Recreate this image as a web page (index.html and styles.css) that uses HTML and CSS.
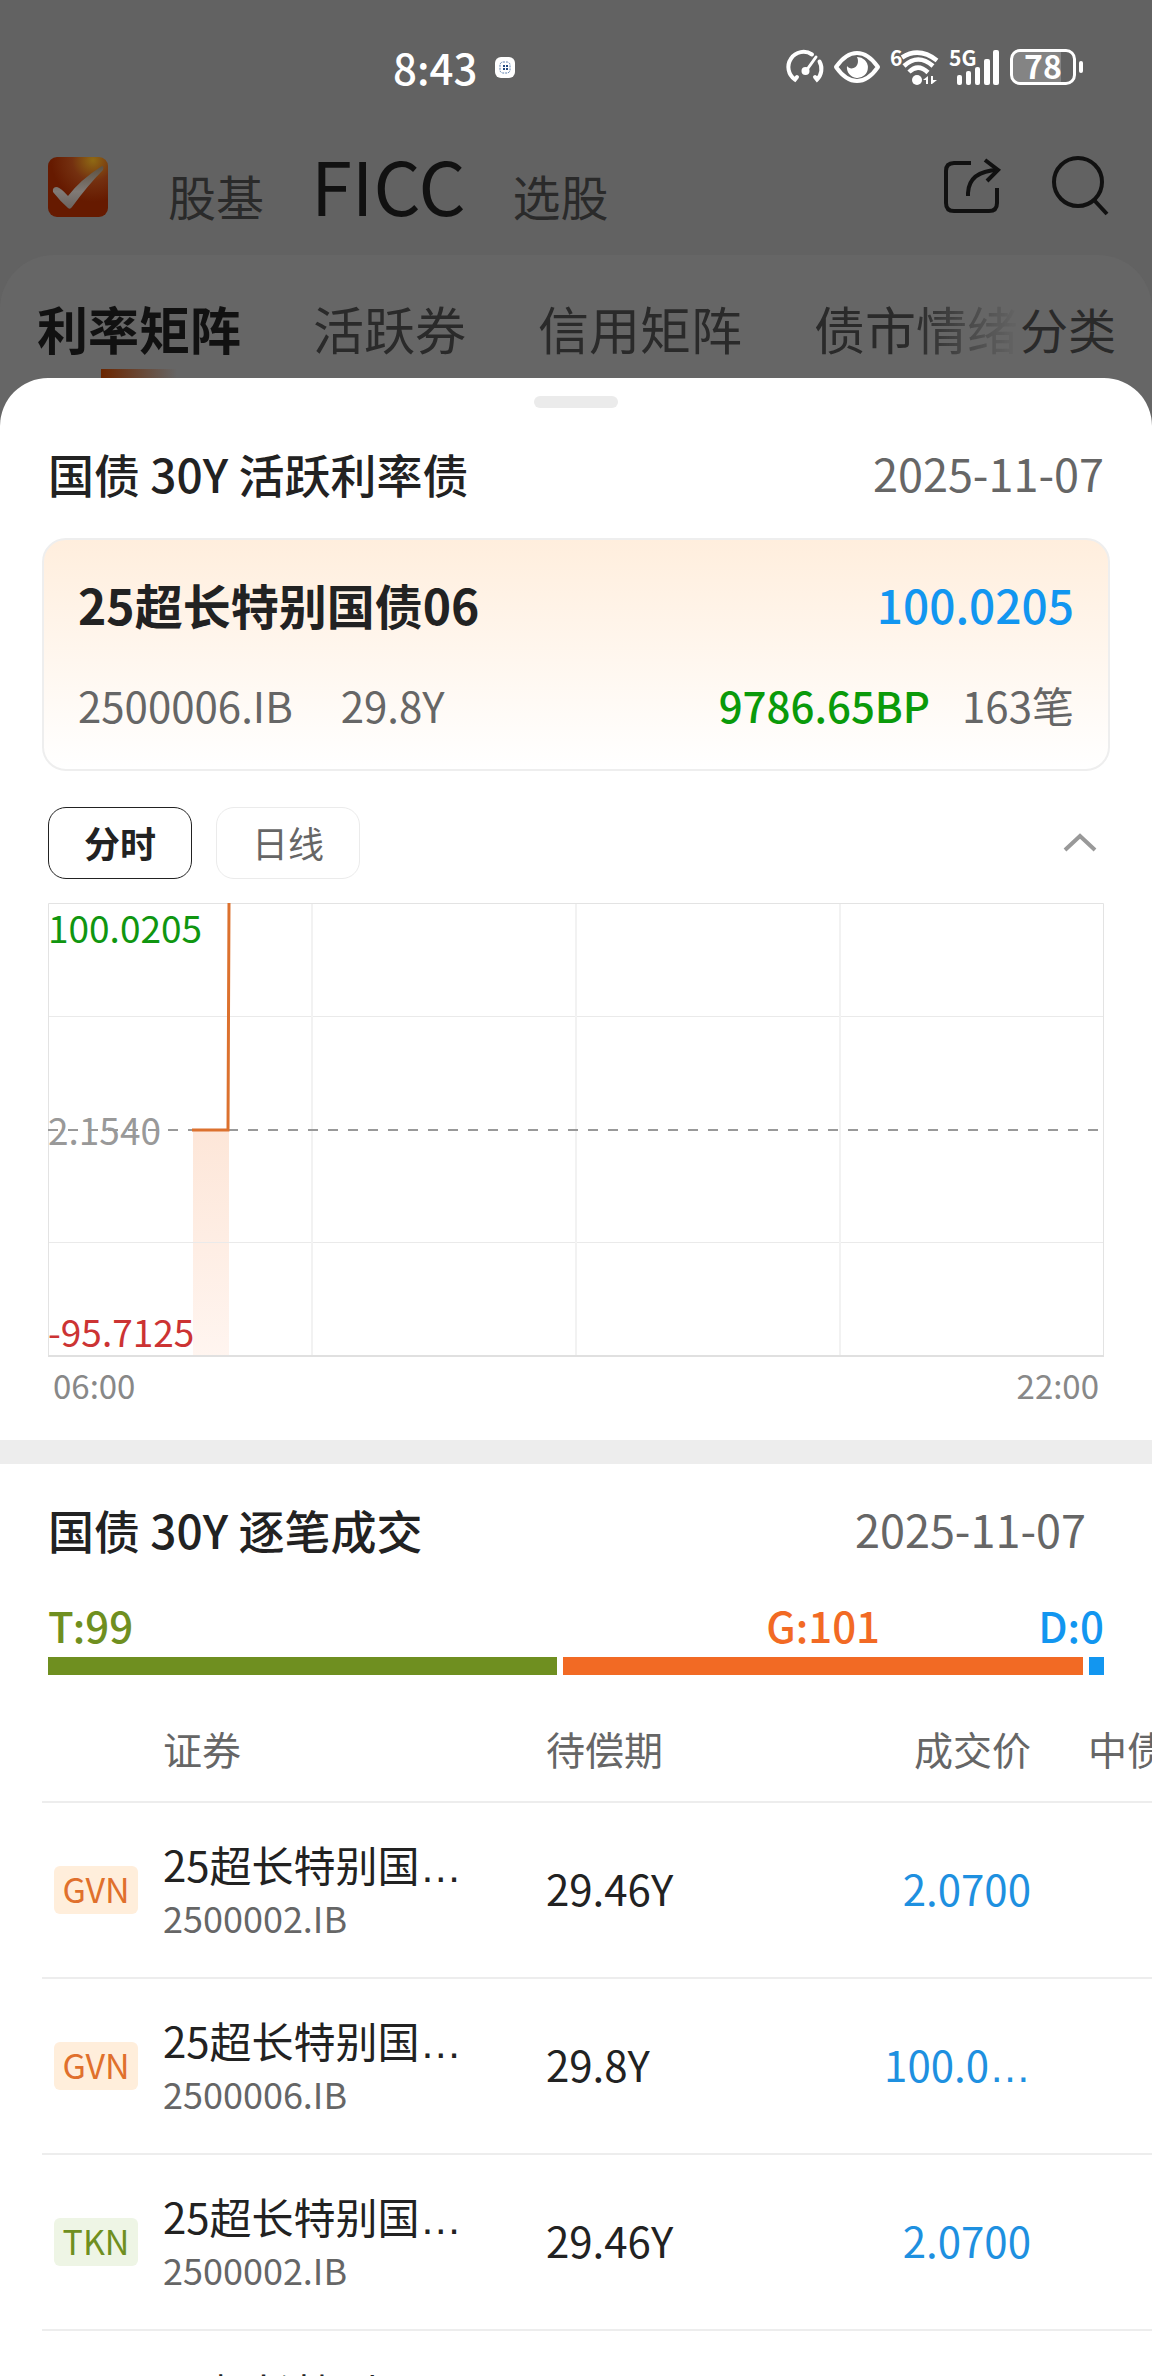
FILE: index.html
```html
<!DOCTYPE html>
<html lang="zh-CN">
<head>
  <meta charset="UTF-8" />
  <meta name="viewport" content="width=device-width, initial-scale=1" />
  <title>国债 30Y 活跃利率债</title>
  <link rel="stylesheet" href="styles.css">
</head>
<body>
  <div class="status-bar">
    <div class="status-time">
      <span>8:43</span>
      <svg width="20" height="21" viewBox="0 0 20 21">
        <rect x="0" y="0" width="20" height="21" rx="6" fill="#fff" />
        <rect x="5" y="5" width="10" height="11" rx="3" fill="none" stroke="#5b7fae" stroke-dasharray="2 1" />
        <path d="M8 8h2v2h-2zM11 8h2v2h-2zM8 11h2v2h-2zM11 11h2v2h-2z" fill="#234a80" />
      </svg>
    </div>

    <div class="status-icons">
      <!-- 性能模式 -->
      <svg width="36" height="36" viewBox="0 0 36 36" fill="none" stroke="#fff" stroke-width="4" stroke-linecap="round">
        <path d="M24 5.500A15 15 0 0 0 7 30.500L9 28" />
        <path d="M31.500 12.500A15 15 0 0 1 29 30.500L27 28" />
        <path d="M18 22L28 8" stroke-width="3" />
        <circle cx="17.500" cy="22" r="4" fill="#fff" stroke="none" />
      </svg>
      <!-- 护眼 -->
      <svg width="48" height="36" viewBox="0 0 48 36">
        <path d="M3 18C10 8 16 4 24 4S38 8 45 18C38 28 32 32 24 32S10 28 3 18Z" fill="none" stroke="#fff" stroke-width="4" stroke-linejoin="round" />
        <path d="M24 8A10.500 10.500 0 1 1 14 17C16 20 20 20 22.500 18C25.500 15.500 25.500 11 24 8Z" fill="#fff" />
      </svg>
      <svg width="50" height="38" viewBox="0 0 50 38" fill="none" stroke="#fff" stroke-width="4.500">
        <text x="0" y="18" class="icon-text">6</text>
        <path d="M12 9.500Q29 -1.500 47 12.500" />
        <path d="M14 18Q28 5 43 18" />
        <path d="M19 24Q28 15 38 24.500" />
        <circle cx="27" cy="32" r="5" fill="#fff" stroke="none" />
        <path d="M33 32l5-4v8h-2v-4zM41 28h2v4h4l-5 4h-1z" fill="#fff" stroke="none" />
      </svg>
      <svg width="52" height="38" viewBox="0 0 52 38" fill="#fff">
        <text x="0" y="18" class="icon-text">5G</text>
        <rect x="8" y="27" width="5" height="10" rx="2" />
        <rect x="17" y="23" width="5" height="14" rx="2" />
        <rect x="26" y="19" width="5" height="18" rx="2" />
        <rect x="35" y="11" width="6" height="26" rx="2" />
        <rect x="44" y="2" width="6" height="35" rx="2" />
      </svg>
      <div class="battery">78</div>
    </div>
  </div>

  <header>
    <svg class="logo" width="60" height="60" viewBox="0 0 60 60">
      <defs>
        <radialGradient id="logoBg" cx="0.75" cy="0.05" r="0.7">
          <stop offset="0" stop-color="#8f6a14" />
          <stop offset="0.5" stop-color="#743010" />
          <stop offset="1" stop-color="#661a00" />
        </radialGradient>
        <linearGradient id="logoTick" x1="0" y1="0" x2="0" y2="1">
          <stop offset="0" stop-color="#5c5040" />
          <stop offset="0.6" stop-color="#807a76" />
          <stop offset="1" stop-color="#6a625e" />
        </linearGradient>
      </defs>
      <rect width="60" height="60" rx="9" fill="url(#logoBg)" />
      <path d="M5 35Q4 30 9 30Q13 31 20 39Q32 23 54 9Q56 9 55 13Q40 28 24 50Q22 53 20 51Q12 44 5 35Z" fill="url(#logoTick)" />
    </svg>
    <nav class="markets">
      <a href="#">股基</a>
      <a href="#" class="current">FICC</a>
      <a href="#">选股</a>
    </nav>
    <button class="icon-btn" aria-label="分享">
      <svg width="60" height="60" viewBox="0 0 60 60" fill="none" stroke="#111" stroke-width="4">
        <path d="M29 6H12Q4 6 4 14V46Q4 54 12 54H47Q55 54 55 46V31" />
        <path d="M26 39V36Q27 14 56 13" />
        <path d="M43 3L56 13L45 24" />
      </svg>
    </button>
    <button class="icon-btn" aria-label="搜索">
      <svg width="60" height="60" viewBox="0 0 60 60" fill="none" stroke="#111" stroke-width="4">
        <circle cx="27" cy="25" r="24" />
        <path d="M43 43L56 57" />
      </svg>
    </button>
  </header>

  <div class="tabs">
    <div class="tab-list">
      <a href="#" class="active">利率矩阵</a>
      <a href="#">活跃券</a>
      <a href="#">信用矩阵</a>
      <a href="#">债市情绪</a>
    </div>
    <a href="#" class="category">分类</a>
  </div>

  <main>
    <div class="handle"></div>

    <section class="bond">
      <div class="title">
        <h2>国债 30Y 活跃利率债</h2>
        <span class="date">2025-11-07</span>
      </div>

      <div class="card">
        <div class="row main-row">
          <strong class="bond-name">25超长特别国债06</strong>
          <strong class="price">100.0205</strong>
        </div>
        <div class="row">
          <span class="code">2500006.IB</span>
          <span>29.8Y</span>
          <strong class="bp">9786.65BP</strong>
          <span>163笔</span>
        </div>
      </div>

      <div class="tools">
        <button class="mode selected">分时</button>
        <button class="mode">日线</button>
        <button class="collapse" aria-label="收起">
          <svg width="36" height="24" viewBox="0 0 36 24" fill="none" stroke="#999" stroke-width="4">
            <path d="M3 19L18 5L33 19" />
          </svg>
        </button>
      </div>

      <div class="chart">
        <svg viewBox="0 0 1056 454" preserveAspectRatio="none">
          <defs>
            <linearGradient id="area" x1="0" y1="0" x2="0" y2="1">
              <stop offset="0" stop-color="#fde6d8" />
              <stop offset="1" stop-color="#fff5f0" />
            </linearGradient>
          </defs>
          <rect x="145" y="227" width="36" height="227" fill="url(#area)" />
          <g fill="none" stroke="#eaeaea" stroke-width="1">
            <path d="M0 113.500H1056M0 339.500H1056" />
            <path d="M264 0V453M528 0V453M792 0V453" stroke="#f2f2f2" stroke-width="2" />
            <path d="M0.500 453V0.500H1055.500V453" stroke="#e3e3e3" />
            <path d="M0 453H1056" stroke="#e0e0e0" stroke-width="2" />
          </g>
          <path d="M0 227H1056" stroke="#999" stroke-width="2" stroke-dasharray="10 10" />
          <path d="M144 227H180L181 0" fill="none" stroke="#dc712e" stroke-width="3" />
        </svg>
        <span class="label high">100.0205</span>
        <span class="label mid">2.1540</span>
        <span class="label low">-95.7125</span>
      </div>
      <div class="axis">
        <span>06:00</span>
        <span>22:00</span>
      </div>
    </section>

    <section class="trades">
      <div class="title">
        <h2>国债 30Y 逐笔成交</h2>
        <span class="date">2025-11-07</span>
      </div>

      <div class="ratio">
        <div class="part tkn" style="flex-grow: 99">T:99</div>
        <div class="part gvn" style="flex-grow: 101">G:101</div>
        <div class="part done">D:0</div>
      </div>

      <div class="table-wrap">
        <table>
          <colgroup>
            <col class="col-side"><col class="col-name"><col class="col-term"><col class="col-price"><col class="col-value">
          </colgroup>
          <thead>
            <tr><th></th><th>证券</th><th>待偿期</th><th class="num">成交价</th><th class="value">中债估值</th></tr>
          </thead>
          <tbody>
            <tr>
              <td><span class="badge gvn">GVN</span></td>
              <td class="bond-cell"><div class="name">25超长特别国<span class="dots">…</span></div><div class="sub">2500002.IB</div></td>
              <td class="fig">29.46Y</td>
              <td class="fig num">2.0700</td>
              <td></td>
            </tr>
            <tr>
              <td><span class="badge gvn">GVN</span></td>
              <td class="bond-cell"><div class="name">25超长特别国<span class="dots">…</span></div><div class="sub">2500006.IB</div></td>
              <td class="fig">29.8Y</td>
              <td class="fig num">100.0<span class="dots">…</span></td>
              <td></td>
            </tr>
            <tr>
              <td><span class="badge tkn">TKN</span></td>
              <td class="bond-cell"><div class="name">25超长特别国<span class="dots">…</span></div><div class="sub">2500002.IB</div></td>
              <td class="fig">29.46Y</td>
              <td class="fig num">2.0700</td>
              <td></td>
            </tr>
            <tr>
              <td></td>
              <td class="bond-cell"><div class="name">25超长特别国<span class="dots">…</span></div><div class="sub">2500002.IB</div></td>
              <td></td>
              <td></td>
              <td></td>
            </tr>
          </tbody>
        </table>
      </div>
    </section>
  </main>
</body>
</html>
```

FILE: styles.css
```css
* {
  box-sizing: border-box;
}

body {
  font-family: "Noto Sans CJK SC", sans-serif;
  margin: 0;
  background: #626262;
  color: #222;
  height: 100vh;
  overflow: hidden;
}

a {
  color: inherit;
  text-decoration: none;
}

button {
  font-family: inherit;
  background: none;
  border: 0;
  padding: 0;
  cursor: pointer;
}

svg {
  display: block;
  flex: none;
  overflow: visible;
}

/* status bar */
.status-bar {
  display: flex;
  align-items: center;
  justify-content: space-between;
  height: 136px;
  padding: 0 70px 2px 393px;
  color: #fff;
}

.status-time {
  display: flex;
  align-items: center;
  gap: 18px;
  font-size: 42px;
  font-weight: 500;
  line-height: 56px;
}

.status-icons {
  display: flex;
  align-items: center;
  gap: 9px;
}

.icon-text {
  font-family: "Noto Sans CJK SC", sans-serif;
  font-size: 21px;
  font-weight: bold;
  fill: #fff;
  stroke: none;
}

.battery {
  position: relative;
  width: 66px;
  height: 36px;
  margin-right: 6px;
  border: 3px solid #fff;
  border-radius: 10px;
  background: linear-gradient(to right, #848484 80%, transparent 80%);
  font-size: 32px;
  font-weight: bold;
  line-height: 26px;
  text-align: center;
}

.battery::after {
  content: "";
  position: absolute;
  right: -10px;
  top: 9px;
  width: 4px;
  height: 12px;
  border-radius: 2px;
  background: #fff;
}

/* header */
header {
  display: flex;
  align-items: center;
  height: 119px;
  padding: 0 41px 17px 48px;
}

.markets {
  flex: 1;
  display: flex;
  align-items: baseline;
  gap: 47px;
  margin-left: 60px;
  padding-top: 4px;
  font-size: 48px;
  line-height: 72px;
  color: #2a2a2a;
}

.markets .current {
  font-size: 74px;
  color: #111;
}

.icon-btn + .icon-btn {
  margin-left: 49px;
}

/* tabs */
.tabs {
  display: flex;
  align-items: flex-start;
  height: 171px;
  padding: 36px 36px 0 37px;
  border-radius: 54px 54px 0 0;
  background: #666;
  font-size: 51px;
  line-height: 74px;
  color: #2a2a2a;
}

.tab-list {
  flex: 1;
  display: flex;
  gap: 72px;
  overflow: hidden;
  white-space: nowrap;
  mask-image: linear-gradient(to right, #000 calc(100% - 110px), transparent);
}

.tab-list .active {
  font-weight: bold;
  color: #111;
}

.tab-list .active::after {
  content: "";
  display: block;
  width: 76px;
  height: 12px;
  margin: 4px auto 0;
  background: linear-gradient(to right, #6b2600, #666);
}

.category {
  font-size: 48px;
}

/* sheet */
main {
  position: relative;
  margin-top: -48px;
  padding-top: 18px;
  border-radius: 48px 48px 0 0;
  background: #fff;
}

.handle {
  width: 84px;
  height: 12px;
  margin: 0 auto;
  border-radius: 6px;
  background: #ebebeb;
}

.title {
  display: flex;
  justify-content: space-between;
  padding: 0 48px;
  line-height: 60px;
}

.title h2 {
  margin: 0;
  font-size: 46px;
  font-weight: 500;
}

.date {
  font-size: 45px;
  color: #666;
}

.bond {
  padding: 35px 0 35px;
  border-bottom: 24px solid #ededed;
}

.card {
  margin: 35px 42px 36px;
  padding: 34px;
  border: 2px solid #eee;
  border-radius: 24px;
  background: linear-gradient(#ffeedd, #fff);
}

.row {
  display: flex;
  font-size: 42px;
  line-height: 60px;
  color: #666;
}

.main-row {
  justify-content: space-between;
  margin-bottom: 41px;
  font-size: 46px;
  color: #222;
}

.row strong {
  font-weight: 500;
}

.main-row .bond-name {
  font-size: 48px;
  font-weight: bold;
}

.main-row .price {
  color: #1296f0;
}

.code {
  margin-right: 48px;
}

.row .bp {
  margin: 0 32px 0 auto;
  color: #0a9a0a;
}

.tools {
  display: flex;
  align-items: center;
  gap: 24px;
  padding: 0 48px;
}

.mode {
  width: 144px;
  height: 72px;
  padding-bottom: 2px;
  border: 1px solid #ebebeb;
  border-radius: 18px;
  font-size: 36px;
  line-height: 48px;
  color: #666;
}

.mode.selected {
  border-color: #222;
  font-weight: bold;
  color: #222;
}

.collapse {
  margin-left: auto;
  margin-right: 6px;
}

.chart {
  position: relative;
  margin: 24px 48px 0;
}

.chart svg {
  width: 100%;
  height: 454px;
}

.label {
  position: absolute;
  left: 0;
  font-size: 37px;
  line-height: 48px;
}

.high {
  top: 0;
  color: #109610;
}

.mid {
  top: 202px;
  color: #999;
}

.low {
  bottom: 2px;
  color: #cc3333;
}

.axis {
  display: flex;
  justify-content: space-between;
  margin-top: 8px;
  padding: 0 53px;
  font-size: 33px;
  line-height: 40px;
  color: #888;
}

/* trades */
.trades {
  padding-top: 35px;
}

.trades .title {
  padding-right: 66px;
}

.ratio {
  display: flex;
  gap: 6px;
  margin: 41px 48px 20px;
  font-size: 42px;
  font-weight: 500;
  line-height: 50px;
}

.part {
  flex: 1 1 0;
  display: flex;
  flex-direction: column;
  align-items: center;
  gap: 7px;
}

.part::after {
  content: "";
  width: 100%;
  height: 18px;
  background: currentColor;
}

.part.tkn {
  align-items: flex-start;
  color: #6f8f20;
}

.part.gvn {
  color: #f26a24;
}

/* narrow part, its label hangs out to the left */
.part.done {
  flex: 0 0 15px;
  width: 15px;
  min-width: 0;
  align-items: flex-end;
  color: #1296f0;
}

.table-wrap {
  margin-left: 42px;
  overflow: hidden;
}

table {
  table-layout: fixed;
  width: 1250px;
  border-collapse: separate;
  border-spacing: 0;
}

.col-side { width: 121px; }
.col-name { width: 383px; }
.col-term { width: 255px; }
.col-price { width: 230px; }

th,
td {
  padding: 0;
  border-bottom: 2px solid #ededed;
  text-align: left;
  white-space: nowrap;
}

th {
  height: 108px;
  font-size: 39px;
  font-weight: normal;
  color: #666;
}

th.value {
  padding-left: 57px;
}

td {
  height: 176px;
}

.num {
  text-align: right;
}

.fig {
  padding-bottom: 6px;
  font-size: 42px;
}

.fig.num {
  color: #1e90e0;
}

.bond-cell {
  padding-bottom: 4px;
}

.name {
  font-size: 42px;
  line-height: 54px;
}

.sub {
  font-size: 36px;
  line-height: 44px;
  color: #666;
}

/* baseline ellipsis, the CJK one sits in the middle of the line */
.dots {
  font-family: "Liberation Sans", sans-serif;
}

.badge {
  display: block;
  width: 84px;
  height: 48px;
  margin-left: 12px;
  border-radius: 6px;
  font-size: 34px;
  line-height: 46px;
  text-align: center;
}

.badge.gvn {
  background: #ffeedb;
  color: #e0702c;
}

.badge.tkn {
  background: #eef5e5;
  color: #6f8f20;
}
```
